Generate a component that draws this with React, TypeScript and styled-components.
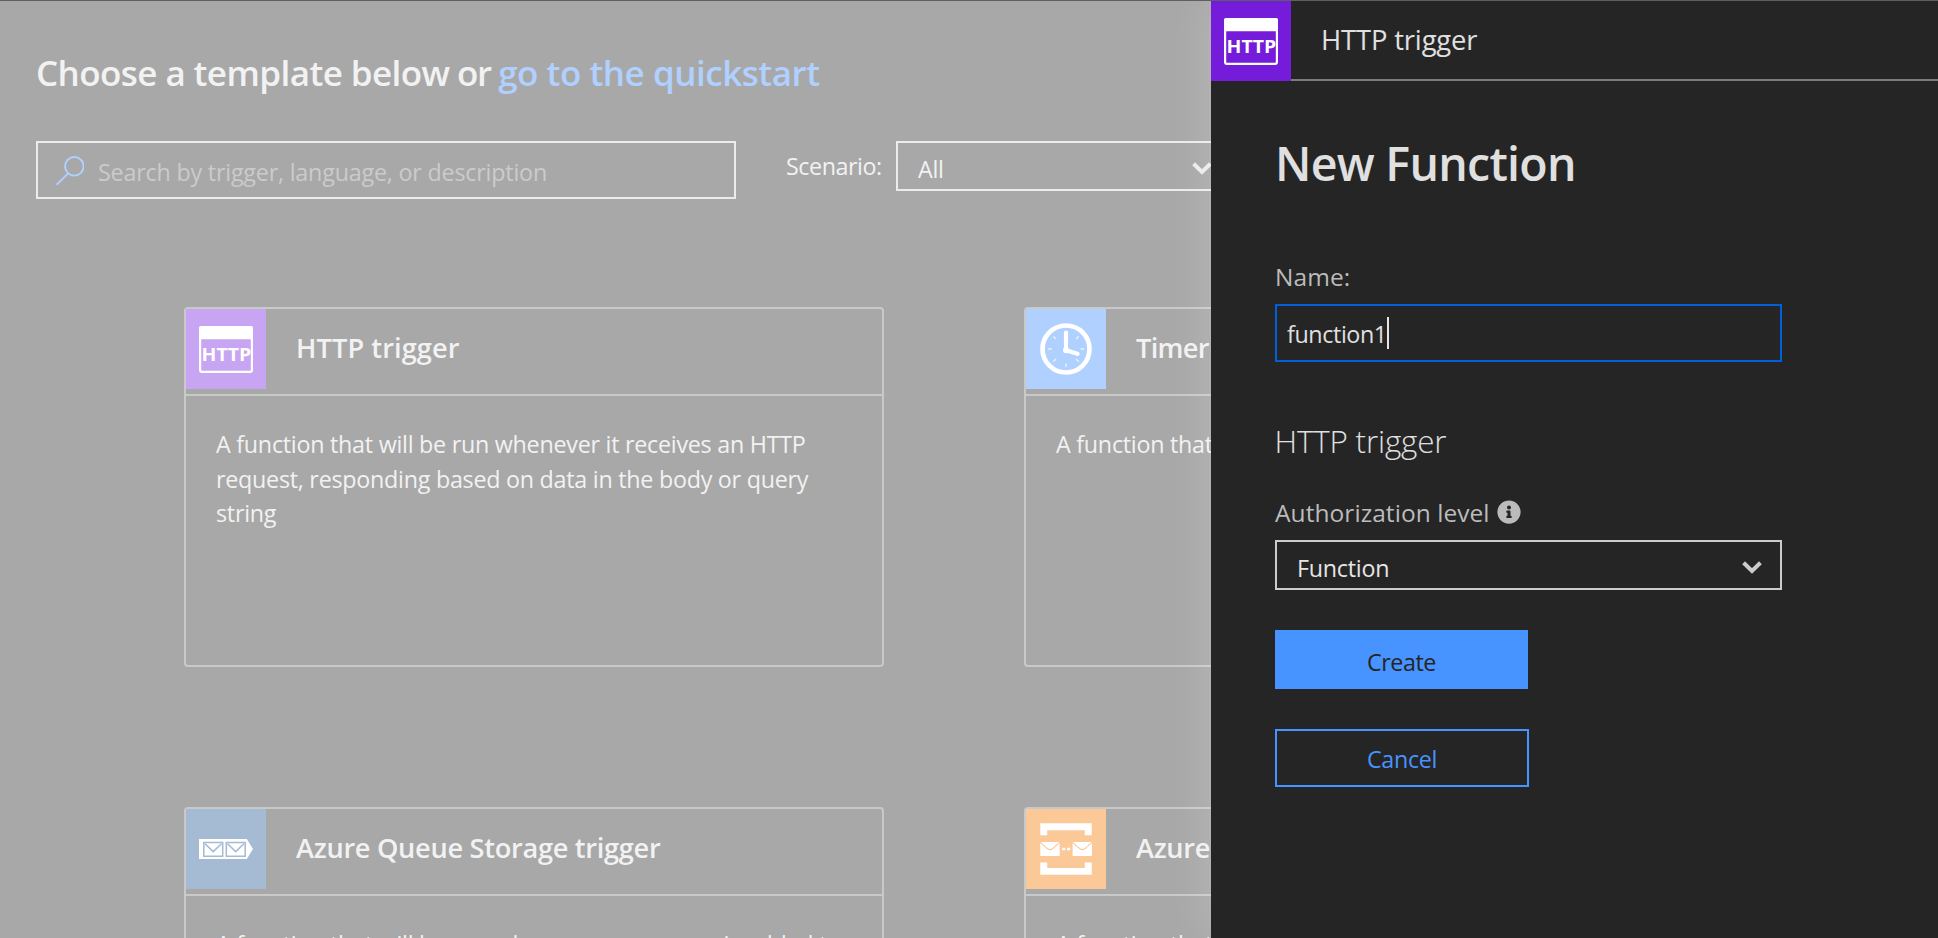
import React from "react";
import styled, { createGlobalStyle } from "styled-components";
import { FaInfoCircle } from "react-icons/fa";

const GlobalStyle = createGlobalStyle`
  * { box-sizing: border-box; }
  body {
    margin: 0;
    background: #a8a8a8;
    font-family: "Open Sans", "Noto Sans", sans-serif;
    font-size: 23.3px;
  }
  h1, h2, h3, p { margin: 0; }
`;

const Page = styled.div`
  display: flex;
  height: 100vh;
  overflow: hidden;
  border-top: 1px solid #5f5f5f;
  background: #a8a8a8;
  color: #f2f2f2;
`;

const Main = styled.main`
  flex: 1;
  min-width: 0;
  overflow: hidden;
  padding: 48px 0 0 36px;
`;

const Heading = styled.h1`
  display: flex;
  gap: 7.5px;
  font-size: 35px;
  font-weight: 600;
  line-height: 48px;
  letter-spacing: -0.58px;
  white-space: nowrap;
`;

const Joiner = styled.span`
  letter-spacing: -1.4px;
`;

const QuickstartLink = styled.a`
  color: #b0d0ff;
  letter-spacing: -0.47px;
`;

const FilterBar = styled.div`
  display: flex;
  align-items: flex-start;
  height: 58px;
  margin-top: 44px;
`;

const SearchBox = styled.div`
  display: flex;
  align-items: center;
  flex: none;
  gap: 14px;
  width: 700px;
  height: 58px;
  padding: 0 18px;
  border: 2px solid #ececec;
  color: #cbcbcb;
  letter-spacing: -0.2px;

  span { padding-top: 3px; }
`;

const ScenarioLabel = styled.label`
  flex: none;
  width: 110px;
  margin-left: 50px;
  padding-top: 8.5px;
  line-height: 32px;
  letter-spacing: -0.46px;
`;

const Select = styled.div<{ $width: number; $border: string }>`
  display: flex;
  align-items: center;
  justify-content: space-between;
  flex: none;
  width: ${(p) => p.$width}px;
  height: 50px;
  padding: 5px 18px 0 20px;
  border: 2px solid ${(p) => p.$border};
  color: ${(p) => (p.$border === "#ececec" ? "#f2f2f2" : "#e6e6e6")};
  letter-spacing: -0.25px;

  svg { color: ${(p) => p.$border}; }
`;

const CardGrid = styled.section`
  display: grid;
  grid-template-columns: 700px 700px;
  grid-auto-rows: 360px;
  gap: 140px;
  margin: 108px 0 0 148px;
`;

const Card = styled.article`
  border: 2px solid #c9c9c9;
  border-radius: 4px;
`;

const CardHeader = styled.header`
  display: flex;
  height: 87px;
  border-bottom: 2px solid #c9c9c9;
`;

const Tile = styled.div<{ $color: string }>`
  flex: none;
  width: 80px;
  height: 80px;
  background: ${(p) => p.$color};
  color: ${(p) => p.$color};

  svg { display: block; }
`;

const CardTitle = styled.h2<{ $tracking: number }>`
  margin-left: 30px;
  font-size: 27.2px;
  font-weight: 600;
  line-height: 77px;
  letter-spacing: ${(p) => p.$tracking}px;
  white-space: nowrap;
`;

const CardText = styled.p`
  padding: 31px 30px 0;
  line-height: 34.5px;
  letter-spacing: -0.26px;
`;

const Panel = styled.aside`
  position: relative;
  flex: none;
  width: 727px;
  background: #252525;
  color: #e0e0e0;
  box-shadow: 0 0 40px rgba(255, 255, 255, 0.22);
`;

const PanelHeader = styled.header`
  display: flex;
  height: 80px;
`;

const PanelTitle = styled.div`
  flex: 1;
  padding-left: 30px;
  border-bottom: 2px solid #7d7d7d;
  font-size: 27.4px;
  line-height: 78px;
  letter-spacing: -0.15px;
`;

const Form = styled.div`
  display: flex;
  flex-direction: column;
  align-items: flex-start;
  padding: 52px 0 0 64px;
`;

const FormTitle = styled.h2`
  font-size: 46.5px;
  font-weight: 600;
  line-height: 60px;
  letter-spacing: -0.72px;
`;

const FieldLabel = styled.label<{ $top: number }>`
  display: flex;
  align-items: center;
  gap: 7px;
  margin: ${(p) => p.$top}px 0 10px;
  color: #bbbbbb;
  font-size: 24.5px;
  line-height: 35px;
  letter-spacing: 0.06px;

  svg { margin-bottom: 2px; }
`;

const NameInput = styled.div`
  display: flex;
  align-items: center;
  width: 507px;
  height: 58px;
  padding: 0 10px;
  border: 2px solid #005fdb;
  letter-spacing: -0.4px;

  span { padding-top: 1px; }
`;

const Caret = styled.i`
  width: 2px;
  height: 32px;
  margin-left: -0.2px;
  background: #e6e6e6;
`;

const SectionTitle = styled.h3`
  margin: 56px 0 0 -0.5px;
  font-size: 31.4px;
  font-weight: 300;
  line-height: 45px;
  letter-spacing: -0.18px;
`;

const Button = styled.button<{ $primary?: boolean }>`
  width: ${(p) => (p.$primary ? 253 : 254)}px;
  height: ${(p) => (p.$primary ? 59 : 58)}px;
  margin-top: 40px;
  padding: ${(p) => (p.$primary ? 4 : 2)}px 0 0;
  border: ${(p) => (p.$primary ? "none" : "2px solid #4793ff")};
  background: ${(p) => (p.$primary ? "#4793ff" : "transparent")};
  color: ${(p) => (p.$primary ? "#252525" : "#4793ff")};
  font: inherit;
  letter-spacing: ${(p) => (p.$primary ? -0.45 : -0.3)}px;
`;

const SearchIcon = () => (
  <svg width="28" height="36" viewBox="0 0 28 36" fill="none" stroke="#b0d0ff" strokeWidth="1.9">
    <circle cx="18.3" cy="14.3" r="9.3" />
    <path d="M12.2 21.4 0.6 32.8" />
  </svg>
);

const Chevron = () => (
  <svg width="20" height="13" viewBox="0 0 20 13" fill="none" stroke="currentColor" strokeWidth="4">
    <path d="M1.6 1.8 10 10l8.4-8.2" />
  </svg>
);

const HttpIcon = () => (
  <svg width="80" height="80" viewBox="0 0 80 80">
    <rect x="14.1" y="18.1" width="51.8" height="44.8" rx="1.8" fill="none" stroke="#fff" strokeWidth="2.2" />
    <path fill="#fff" d="M13 30.3V19q0-2 2-2h50q2 0 2 2v11.3z" />
    <text
      x="15.6"
      y="52.4"
      fill="#fff"
      fontFamily="Open Sans, sans-serif"
      fontSize="18.6"
      fontWeight="700"
      textLength="49.6"
      lengthAdjust="spacingAndGlyphs"
    >
      HTTP
    </text>
  </svg>
);

const ClockIcon = () => (
  <svg width="80" height="80" viewBox="0 0 80 80" fill="none" stroke="#fff" strokeLinecap="round">
    <circle cx="40" cy="40" r="23.5" strokeWidth="4.7" />
    <path strokeWidth="4.2" d="M40 23.5V41.2L51.5 44.8" strokeLinejoin="round" />
    <circle cx="40" cy="41.2" r="1.5" strokeWidth="3" />
    <path
      strokeWidth="1.4"
      opacity="0.7"
      d="M22.5 40h2.6M55 40h2.6M40 55v2.6M27.7 27.7l1.8 1.8M52.3 27.7l-1.8 1.8M27.7 52.3l1.8-1.8M52.3 52.3l-1.8-1.8"
    />
  </svg>
);

const QueueIcon = () => (
  <svg width="80" height="80" viewBox="0 0 80 80">
    <path fill="#fff" d="M13 30h47.8L67 40l-6.2 10H13z" />
    <g fill="none" stroke="currentColor" strokeWidth="1.5">
      <path d="M17.8 33.5h18.9v13.8H17.8zM40.3 33.5h18.9v13.8H40.3z" />
      <path d="M19 34.8l8.2 7.8 8.2-7.8M41.5 34.8l8.2 7.8 8.2-7.8" />
    </g>
  </svg>
);

const ServiceBusIcon = () => (
  <svg width="80" height="80" viewBox="0 0 80 80">
    <path
      fill="#fff"
      d="M14.3 14.3h51.4v12h-6.9v-5H21.2v5h-6.9zM14.3 65.7h51.4V53.4h-6.9V59H21.2v-5.6h-6.9zM14.3 33h19.4v14H14.3zM46.6 33H66v14H46.6zM36 38.7h3.2v2.6H36zM41 38.7h3.2v2.6H41z"
    />
    <path
      fill="none"
      stroke="currentColor"
      strokeWidth="1.1"
      d="M14 33.2l7.6 6.6q2.4 1.7 4.8 0l7.6-6.6M46.3 33.2l7.6 6.6q2.4 1.7 4.8 0l7.6-6.6"
    />
  </svg>
);

const templates = [
  {
    title: "HTTP trigger",
    color: "#c8a5f2",
    tracking: 0.08,
    icon: <HttpIcon />,
    text: "A function that will be run whenever it receives an HTTP request, responding based on data in the body or query string",
  },
  {
    title: "Timer trigger",
    color: "#b0d0ff",
    tracking: -0.7,
    icon: <ClockIcon />,
    text: "A function that will be run on a specified schedule",
  },
  {
    title: "Azure Queue Storage trigger",
    color: "#a5bbd3",
    tracking: -0.29,
    icon: <QueueIcon />,
    text: "A function that will be run whenever a message is added to a specified Azure Storage queue",
  },
  {
    title: "Azure Service Bus Queue trigger",
    color: "#fbc898",
    tracking: -0.34,
    icon: <ServiceBusIcon />,
    text: "A function that will be run whenever a message is added to a specified Service Bus queue",
  },
];

export default function App() {
  return (
    <>
      <GlobalStyle />
      <Page>
        <Main>
          <Heading>
            <span>Choose a template below</span>
            <Joiner>or</Joiner>
            <QuickstartLink>go to the quickstart</QuickstartLink>
          </Heading>
          <FilterBar>
            <SearchBox>
              <SearchIcon />
              <span>Search by trigger, language, or description</span>
            </SearchBox>
            <ScenarioLabel>Scenario:</ScenarioLabel>
            <Select $width={336} $border="#ececec">
              All
              <Chevron />
            </Select>
          </FilterBar>
          <CardGrid>
            {templates.map((t) => (
              <Card key={t.title}>
                <CardHeader>
                  <Tile $color={t.color}>{t.icon}</Tile>
                  <CardTitle $tracking={t.tracking}>{t.title}</CardTitle>
                </CardHeader>
                <CardText>{t.text}</CardText>
              </Card>
            ))}
          </CardGrid>
        </Main>
        <Panel>
          <PanelHeader>
            <Tile $color="#741cda">
              <HttpIcon />
            </Tile>
            <PanelTitle>HTTP trigger</PanelTitle>
          </PanelHeader>
          <Form>
            <FormTitle>New Function</FormTitle>
            <FieldLabel $top={66}>Name:</FieldLabel>
            <NameInput>
              <span>function1</span>
              <Caret />
            </NameInput>
            <SectionTitle>HTTP trigger</SectionTitle>
            <FieldLabel $top={32}>
              Authorization level
              <FaInfoCircle size={24} />
            </FieldLabel>
            <Select $width={507} $border="#cccccc">
              Function
              <Chevron />
            </Select>
            <Button $primary>Create</Button>
            <Button>Cancel</Button>
          </Form>
        </Panel>
      </Page>
    </>
  );
}
